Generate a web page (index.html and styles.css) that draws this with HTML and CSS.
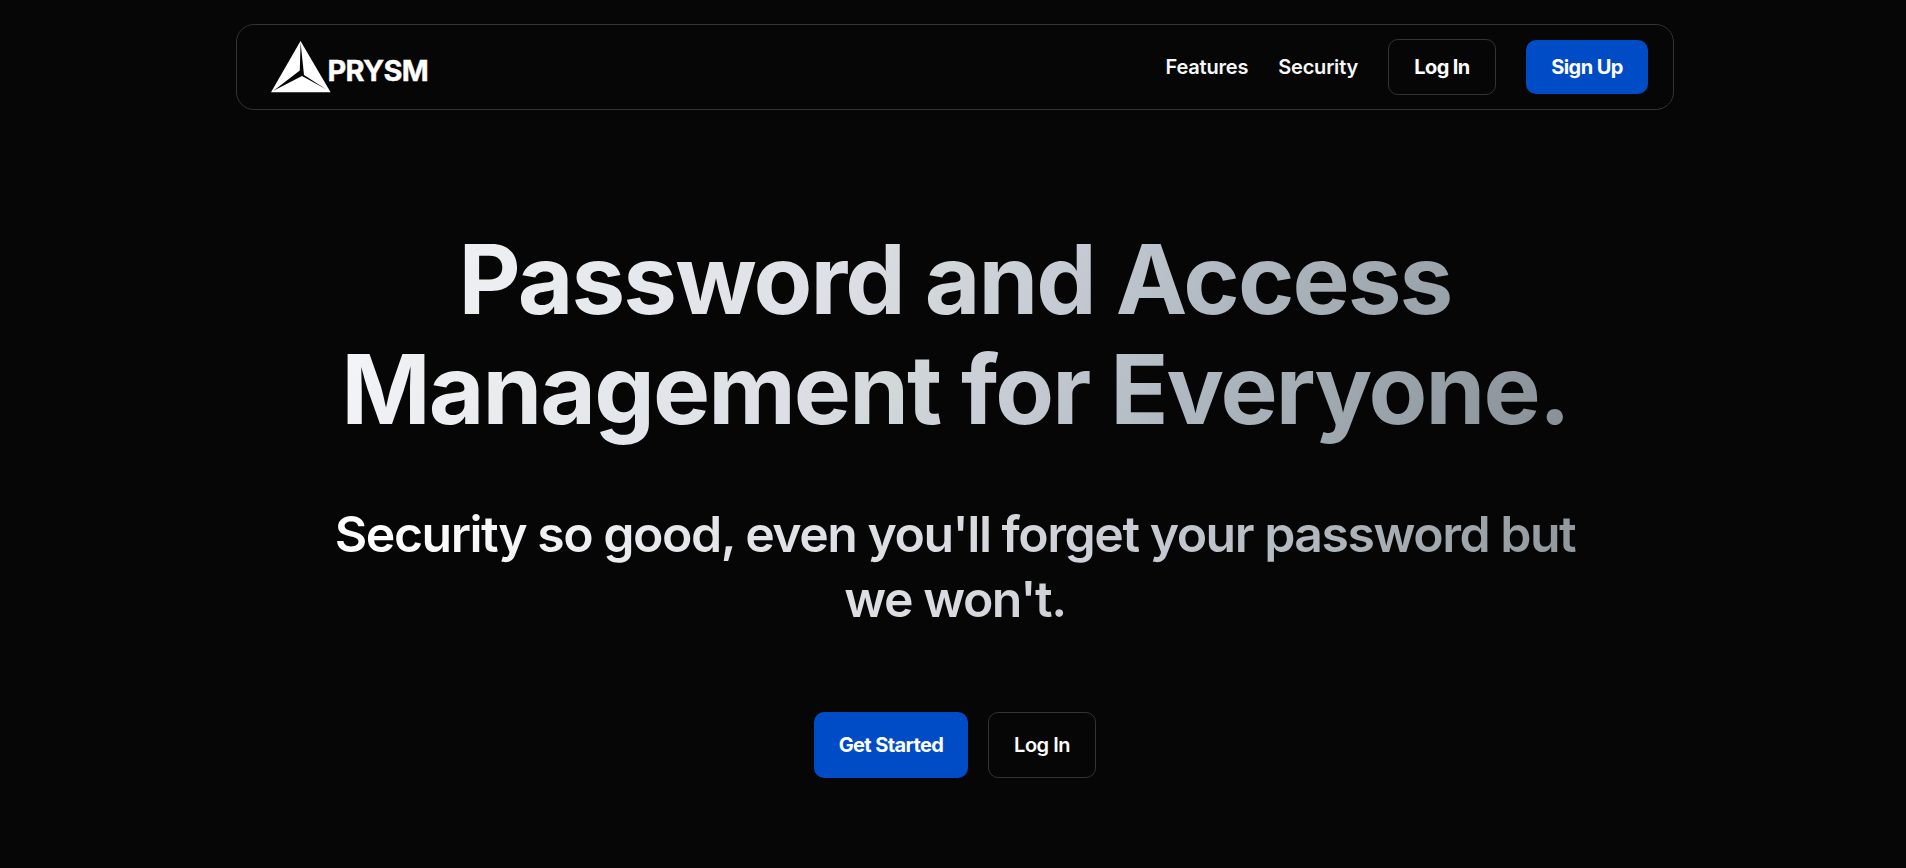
FILE: index.html
```html
<!DOCTYPE html>
<html lang="en">
<head>
<meta charset="utf-8">
<title>Prysm</title>
<link rel="stylesheet" href="styles.css">
</head>
<body>
<div class="page">
  <header class="nav">
    <a class="brand">
      <svg class="brand-mark" width="60" height="52" viewBox="0 0 60 52">
        <path fill="#fff" d="M29.5 0 L59.6 51.3 H0 Z"/>
        <path fill="#060606" d="M29.6 1.5 L33 34 L55.5 48.6 L31 35 L2.5 49.8 L28.8 29.5 Z"/>
      </svg>
      <span class="brand-name">PRYSM</span>
    </a>
    <nav class="links">
      <a class="link">Features</a>
      <a class="link">Security</a>
      <a class="btn btn-outline">Log In</a>
      <a class="btn btn-primary">Sign Up</a>
    </nav>
  </header>
  <main class="hero">
    <h1 class="title">Password and Access Management for Everyone.</h1>
    <h2 class="subtitle">Security so good, even you'll forget your password but we won't.</h2>
    <div class="actions">
      <a class="btn btn-primary btn-large">Get Started</a>
      <a class="btn btn-outline btn-large btn-medium">Log In</a>
    </div>
  </main>
</div>
</body>
</html>
```
FILE: styles.css
```css
* { box-sizing: border-box; }
body {
  margin: 0;
  background: #060606;
  color: #f8f8f8;
  font-family: Inter, "Liberation Sans", sans-serif;
  font-size: 20px;
  overflow: hidden;
}
.page {
  height: 868px;
  padding: 24px 232px 0 236px;
}
.nav {
  height: 86px;
  border: 1px solid #333;
  border-radius: 18px;
  padding: 0 25px 0 34px;
  display: flex;
  align-items: center;
  justify-content: space-between;
}
.brand { display: flex; align-items: center; }
.brand-mark { display: block; margin-right: -3.5px; }
.brand-name {
  font-size: 29px;
  font-weight: 700;
  letter-spacing: -0.75px;
  line-height: 34px;
  margin-top: 7px;
  color: #fff;
  -webkit-text-stroke: 0.4px #fff;
}
.links { display: flex; align-items: center; gap: 30px; }
.link { font-weight: 600; letter-spacing: -0.2px; }
.btn {
  display: flex;
  align-items: center;
  justify-content: center;
  border-radius: 10px;
  font-weight: 700;
  letter-spacing: -0.6px;
  color: #fff;
}
.btn-outline { width: 108px; height: 56px; border: 1px solid #333; }
.btn-primary { width: 122px; height: 54px; background: #004cc7; }
.hero {
  width: 1280px;
  margin: 114px auto 0;
  text-align: center;
}
.title, .subtitle {
  margin: 0;
  color: transparent;
  -webkit-background-clip: text;
  background-clip: text;
}
.title {
  padding-bottom: 6px;
  font-size: 96px;
  line-height: 110.4px;
  font-weight: 700;
  letter-spacing: -1.92px;
  background-image: linear-gradient(113deg, #fafafc 0%, #eeeff3 12%, #e8ebee 20%, #dcdfe5 40%, #d2d7da 47%, #c8ccd5 55%, #b0b9c1 68%, #9aa2a9 84%, #858c93 100%);
}
.subtitle {
  margin: 51px 0 0;
  font-size: 50px;
  line-height: 65px;
  font-weight: 600;
  letter-spacing: -1.5px;
  background-image: linear-gradient(100deg, #fff 0%, #fff 6%, #e6e7eb 28%, #dadbe0 50%, #c4c8d0 66%, #a8b0b6 82%, #8d9399 100%);
}
.actions {
  display: flex;
  justify-content: center;
  gap: 20px;
  margin-top: 80px;
}
.btn-large { height: 66px; }
.btn-large.btn-primary { width: 154px; }
.btn-medium { font-weight: 600; letter-spacing: -0.5px; }
```
